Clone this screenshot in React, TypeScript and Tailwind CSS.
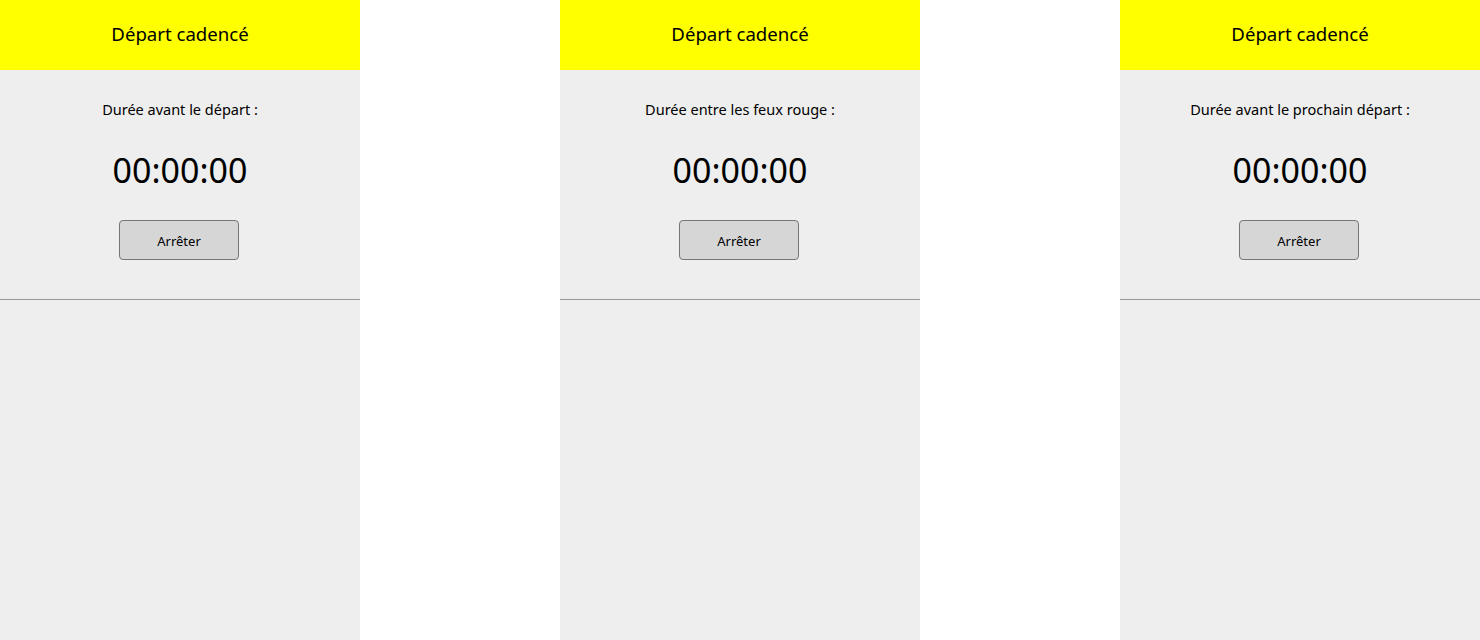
import React from "react";

const panels = [
  "Durée avant le départ :",
  "Durée entre les feux rouge :",
  "Durée avant le prochain départ :",
];

function Panel({ label }: { label: string }) {
  return (
    <div className="w-[360px] shrink-0 flex flex-col bg-[#eeeeee] h-[640px]">
      <div className="h-[70px] bg-[#ffff00] flex items-center justify-center text-[18.6px] leading-[28px] pb-[2px] text-black">
        Départ cadencé
      </div>
      <div className="flex flex-col items-center pt-[27px] pb-[39px] border-b border-[#999999]">
        <div className="text-[14.5px] leading-6 text-black">{label}</div>
        <div className="mt-[27px] text-[34px] leading-[44px] text-black">00:00:00</div>
        <button className="mt-7 mr-[2px] w-[120px] h-10 bg-[#d6d6d6] border border-[#767676] rounded-[4px] text-[13px] leading-[20px] pt-[1px] text-black">
          Arrêter
        </button>
      </div>
    </div>
  );
}

export default function App() {
  return (
    <div
      className="w-[1480px] h-[640px] bg-white flex justify-between overflow-hidden"
      style={{ fontFamily: '"Noto Sans", sans-serif' }}
    >
      {panels.map((p) => (
        <Panel key={p} label={p} />
      ))}
    </div>
  );
}
